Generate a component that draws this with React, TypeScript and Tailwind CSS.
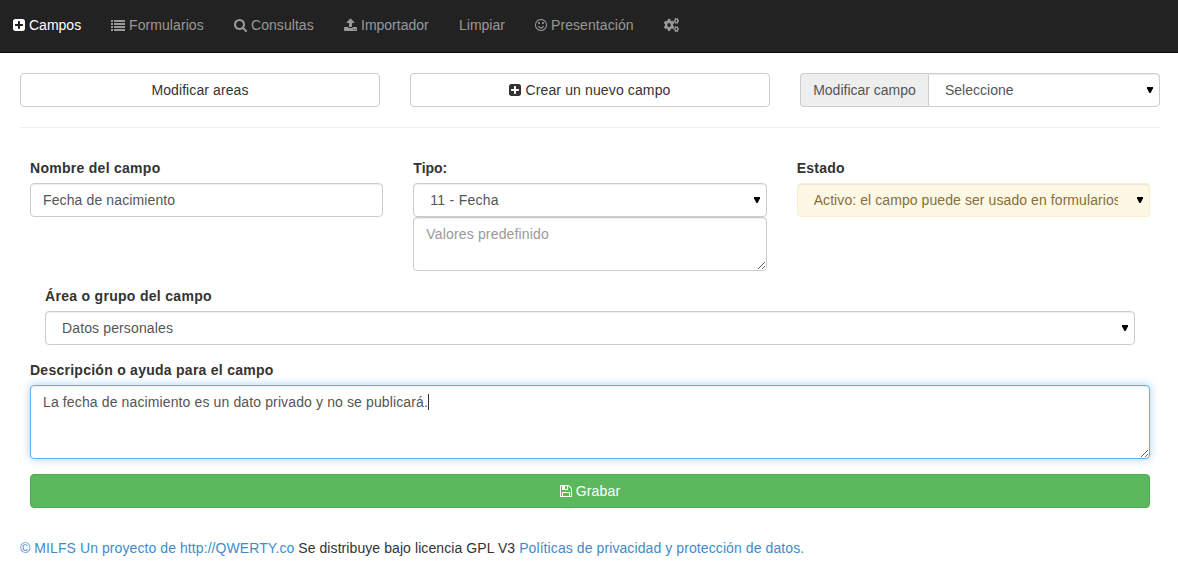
import type { ReactNode } from 'react';
import { FaCogs } from 'react-icons/fa';

const paths = {
  plus: 'M1408 960v-128q0-26-19-45t-45-19h-320v-320q0-26-19-45t-45-19h-128q-26 0-45 19t-19 45v320h-320q-26 0-45 19t-19 45v128q0 26 19 45t45 19h320v320q0 26 19 45t45 19h128q26 0 45-19t19-45v-320h320q26 0 45-19t19-45zm256-544v960q0 119-84.5 203.5t-203.5 84.5h-960q-119 0-203.5-84.5t-84.5-203.5v-960q0-119 84.5-203.5t203.5-84.5h960q119 0 203.5 84.5t84.5 203.5z',
  list: 'M0 2h2v2H0zM3 2h11v2H3zM0 5h2v2H0zM3 5h11v2H3zM0 8h2v2H0zM3 8h11v2H3zM0 11h2v2H0zM3 11h11v2H3z',
  search: 'M1216 832q0-185-131.5-316.5t-316.5-131.5-316.5 131.5-131.5 316.5 131.5 316.5 316.5 131.5 316.5-131.5 131.5-316.5zm512 832q0 52-38 90t-90 38q-54 0-90-38l-343-342q-179 124-399 124-143 0-273.5-55.5t-225-150-150-225-55.5-273.5 55.5-273.5 150-225 225-150 273.5-55.5 273.5 55.5 225 150 150 225 55.5 273.5q0 220-124 399l343 343q37 37 37 90z',
  upload: 'M1344 1472q0-26-19-45t-45-19-45 19-19 45 19 45 45 19 45-19 19-45zm256 0q0-26-19-45t-45-19-45 19-19 45 19 45 45 19 45-19 19-45zm128-224v320q0 40-28 68t-68 28h-1472q-40 0-68-28t-28-68v-320q0-40 28-68t68-28h427q21 56 70.5 92t110.5 36h256q61 0 110.5-36t70.5-92h427q40 0 68 28t28 68zm-325-648q-17 40-59 40h-256v448q0 26-19 45t-45 19h-256q-26 0-45-19t-19-45v-448h-256q-42 0-59-40-17-39 14-69l448-448q18-19 45-19t45 19l448 448q31 30 14 69z',
  smile: 'M1262 1075q-37 121-138 195t-228 74-228-74-138-195q-8-25 4-48.5t38-31.5q25-8 48.5 4t31.5 38q25 80 92.5 129.5t151.5 49.5 151.5-49.5 92.5-129.5q8-26 32-38t49-4 37 31.5 4 48.5zm-494-435q0 53-37.5 90.5t-90.5 37.5-90.5-37.5-37.5-90.5 37.5-90.5 90.5-37.5 90.5 37.5 37.5 90.5zm512 0q0 53-37.5 90.5t-90.5 37.5-90.5-37.5-37.5-90.5 37.5-90.5 90.5-37.5 90.5 37.5 37.5 90.5zm256 256q0-130-51-248.5t-136.5-204-204-136.5-248.5-51-248.5 51-204 136.5-136.5 204-51 248.5 51 248.5 136.5 204 204 136.5 248.5 51 248.5-51 204-136.5 136.5-204 51-248.5zm128 0q0 209-103 385.5t-279.5 279.5-385.5 103-385.5-103-279.5-279.5-103-385.5 103-385.5 279.5-279.5 385.5-103 385.5 103 279.5 279.5 103 385.5z',
  save: 'M512 1536h768v-384h-768v384zm896 0h128v-896q0-14-10-38.5t-20-34.5l-281-281q-10-10-34-20t-39-10v416q0 40-28 68t-68 28h-576q-40 0-68-28t-28-68v-416h-128v1280h128v-416q0-40 28-68t68-28h832q40 0 68 28t28 68v416zm-384-928v-320q0-13-9.5-22.5t-22.5-9.5h-192q-13 0-22.5 9.5t-9.5 22.5v320q0 13 9.5 22.5t22.5 9.5h192q13 0 22.5-9.5t9.5-22.5zm640 32v928q0 40-28 68t-68 28h-1344q-40 0-68-28t-28-68v-1344q0-40 28-68t68-28h928q40 0 88 20t76 48l280 280q28 28 48 76t20 88z',
};

function Icon({ name, box = '128 0 1536 1792', size = 'w-3' }: { name: keyof typeof paths; box?: string; size?: string }) {
  return (
    <svg viewBox={box} className={`h-3.5 shrink-0 ${size}`} fill="currentColor">
      <path d={paths[name]} />
    </svg>
  );
}

const control =
  'block w-full rounded-[4px] border border-[#ccc] bg-white text-sm leading-5 text-[#555] shadow-[inset_0_1px_1px_rgba(0,0,0,0.075)] outline-none';

function Select({ value, look = '', tracking = '' }: { value: string; look?: string; tracking?: string }) {
  return (
    <div className="relative min-w-0 flex-1">
      <select className={`${control} h-[34px] appearance-none overflow-hidden pr-[31px] pl-4 ${look} ${tracking}`}>
        <option>{value}</option>
      </select>
      <svg viewBox="0 0 6 6" className="pointer-events-none absolute top-[14px] right-[7px] size-1.5 text-black" fill="currentColor">
        <path d="M0 0h6v1.2L3.6 6H2.4L0 1.2z" />
      </svg>
    </div>
  );
}

function Field({ label, tracking, children }: { label: string; tracking: string; children: ReactNode }) {
  return (
    <div>
      <label className={`mb-[5px] block text-sm leading-5 font-bold text-[#333] ${tracking}`}>{label}</label>
      {children}
    </div>
  );
}

const button = 'flex h-[34px] w-full items-center justify-center gap-1 rounded-[4px] border text-sm';

export default function App() {
  return (
    <div className="min-h-[578px] bg-white font-['Liberation_Sans',Arial,sans-serif] text-sm leading-5 text-[#333]">
      <nav className="flex h-[53px] items-center gap-[30px] border-b border-[#080808] bg-[#222] pb-0.5 pl-[13px] text-[#999]">
        <a className="flex w-[68px] items-center gap-1 whitespace-nowrap text-white"><Icon name="plus" /><span>Campos</span></a>
        <a className="flex w-[93px] items-center gap-1 whitespace-nowrap"><Icon name="list" box="0 0 14 14" size="w-3.5" /><span className="tracking-[0.08px]">Formularios</span></a>
        <a className="flex w-20 items-center gap-1 whitespace-nowrap"><Icon name="search" box="64 0 1664 1792" size="w-[13px]" /><span className="tracking-[0.05px]">Consultas</span></a>
        <a className="flex w-[85px] items-center gap-1 whitespace-nowrap"><Icon name="upload" box="64 0 1664 1792" size="w-[13px]" /><span>Importador</span></a>
        <a className="w-[46px] whitespace-nowrap">Limpiar</a>
        <a className="flex w-[99px] items-center gap-1 whitespace-nowrap"><Icon name="smile" /><span className="tracking-[0.08px]">Presentación</span></a>
        <a><FaCogs className="h-3.5 w-[15px]" preserveAspectRatio="none" /></a>
      </nav>

      <main className="px-5 pt-5 pr-[18px]">
        <div className="grid grid-cols-3 gap-[30px]">
          <button className={`${button} border-[#ccc] bg-white tracking-[0.1px]`}>Modificar areas</button>
          <button className={`${button} border-[#ccc] bg-white`}><Icon name="plus" /><span className="tracking-[0.13px]">Crear un nuevo campo</span></button>
          <div className="flex">
            <span className="flex h-[34px] w-[128px] items-center justify-center rounded-l-[4px] border border-r-0 border-[#ccc] bg-[#eee] text-[#555]">Modificar campo</span>
            <Select value="Seleccione" look="rounded-l-none" />
          </div>
        </div>

        <hr className="mt-5 mb-[30px] border-[#eee]" />

        <form className="px-2.5">
          <div className="grid grid-cols-3 gap-[30px]">
            <Field label="Nombre del campo" tracking="tracking-[0.28px]">
              <input className={`${control} h-[34px] px-3 tracking-[0.12px]`} defaultValue="Fecha de nacimiento" />
            </Field>
            <Field label="Tipo:" tracking="">
              <Select value="11 - Fecha" tracking="tracking-[0.27px]" />
              <textarea className={`${control} h-[54px] px-3 py-1.5 tracking-[0.16px] placeholder:text-[#999]`} placeholder="Valores predefinido" />
            </Field>
            <Field label="Estado" tracking="tracking-[0.25px]">
              <Select value="Activo: el campo puede ser usado en formularios" tracking="tracking-[0.08px]" look="border-[#faebcc]! bg-[#fcf8e3]! text-[#8a6d3b]!" />
            </Field>
          </div>

          <div className="mt-[15px] px-[15px]">
            <Field label="Área o grupo del campo" tracking="tracking-[0.3px]">
              <Select value="Datos personales" tracking="tracking-[0.13px]" />
            </Field>
          </div>

          <div className="mt-[15px]">
            <Field label="Descripción o ayuda para el campo" tracking="tracking-[0.26px]">
              <div className="relative">
                <textarea
                  className={`${control} h-[74px] border-[#66afe9]! px-3 py-1.5 tracking-[0.125px] shadow-[inset_0_1px_1px_rgba(0,0,0,0.075),0_0_8px_rgba(102,175,233,0.6)]!`}
                  defaultValue="La fecha de nacimiento es un dato privado y no se publicará."
                />
                <span className="absolute top-[9px] left-[398px] h-4 w-px bg-[#333]" />
              </div>
            </Field>
          </div>

          <button type="button" className={`${button} mt-[15px] border-[#4cae4c] bg-[#5cb85c] text-white`}><Icon name="save" /><span className="tracking-[0.15px]">Grabar</span></button>
        </form>

        <footer className="mt-[30px] whitespace-nowrap">
          <a className="tracking-[0.08px] text-[#428bca]">© MILFS Un proyecto de http://QWERTY.co</a>{' '}
          <span className="tracking-[0.08px]">Se distribuye bajo licencia GPL V3</span>{' '}
          <a className="tracking-[0.09px] text-[#428bca]">Políticas de privacidad y protección de datos.</a>
        </footer>
      </main>
    </div>
  );
}
